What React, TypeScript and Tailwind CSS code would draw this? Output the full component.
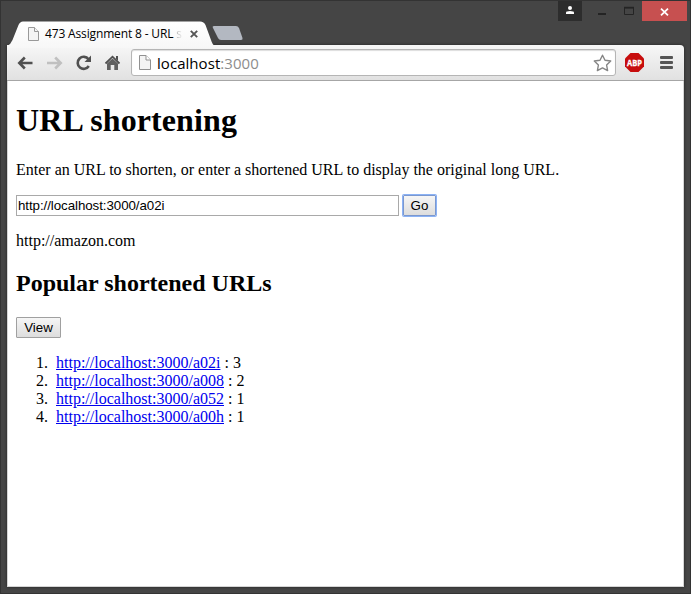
import React from "react";

const links = [
  { id: "a02i", hits: 3 },
  { id: "a008", hits: 2 },
  { id: "a052", hits: 1 },
  { id: "a00h", hits: 1 },
];

function PageIcon({ className }: { className: string }) {
  return (
    <svg className={className} width="12" height="15" viewBox="0 0 12 15" fill="none">
      <path d="M.5.5H7L11.5 5V14.5H.5Z" fill="#f4f4f4" stroke="#919191" />
      <path d="M7 .5V5H11.5" fill="#fff" stroke="#919191" />
    </svg>
  );
}

function TitleBar() {
  return (
    <header className="relative z-10 flex h-[44px] items-start">
      <div className="relative mt-[19px] h-[25px] w-[207px] shrink-0">
        <svg className="absolute inset-0" width="208" height="28" viewBox="0 0 208 28">
          <defs>
            <linearGradient id="tab" x1="0" y1="0" x2="0" y2="1">
              <stop offset="0" stopColor="#fff" />
              <stop offset="1" stopColor="#f7f7f7" />
            </linearGradient>
          </defs>
          <path
            d="M0 28V26Q4 24 5.500 20L11.500 5Q13 1.500 16 1.500H193Q197 1.500 198.500 5L204 20Q205.500 25 208 26V28Z"
            fill="url(#tab)"
          />
        </svg>
        <div className="relative flex h-full items-center pl-[21px] pt-[2px]">
          <svg className="shrink-0" width="11" height="14" viewBox="0 0 11 14" fill="#f4f4f4" stroke="#999">
            <path d="M.5.5H6.500L10.500 4.500V13.500H.5Z" />
            <path d="M6.500.5V4.500H10.500" />
          </svg>
          <div className="ml-[6px] w-[137px] whitespace-nowrap font-['Open_Sans',sans-serif] text-[12px] leading-4 tracking-[-0.15px] text-black">
            473 Assignment 8 - URL{" "}
            <span className="bg-gradient-to-r from-[#aaa] to-[#eee] bg-clip-text text-transparent">s</span>
          </div>
          <svg className="ml-[8px]" width="8" height="8" viewBox="0 0 8 8">
            <path d="M.8 .8L7.200 7.200M7.200 .8L.8 7.200" stroke="#555" strokeWidth="1.900" />
          </svg>
        </div>
      </div>
      <svg className="ml-[-3px] mt-[24px] shrink-0" width="32" height="16" viewBox="0 0 32 16">
        <path d="M3 1H25Q27 1 28 3L31.500 13Q32 15 30 15H10Q8 15 7 13L2 3Q1 1 3 1Z" fill="#b3b8c1" />
      </svg>
      <div className="ml-auto mr-[-3px] flex h-5">
        <div className="flex w-6 items-center justify-center bg-[#2d2d2d]">
          <svg className="mb-px" width="8" height="9" viewBox="0 0 8 9" fill="#fff">
            <circle cx="4" cy="2.100" r="2" />
            <path d="M0 8V6.500Q0 5 4 5T8 6.500V8Z" />
          </svg>
        </div>
        <svg width="60" height="20" viewBox="0 0 60 20">
          <path d="M16 12H24V14H16Z" fill="#242424" />
          <path d="M42.500 7V13.500H51.500V7Z" fill="none" stroke="#242424" />
          <path d="M42 6.500H52" stroke="#242424" strokeWidth="1.500" />
        </svg>
        <div className="flex w-[45px] items-center justify-center bg-[#c75050]">
          <svg className="mt-[1px]" width="9" height="8" viewBox="0 0 9 8">
            <path d="M1 .7L8 7.300M8 .7L1 7.300" stroke="#fff" strokeWidth="1.800" />
          </svg>
        </div>
      </div>
    </header>
  );
}

function Toolbar() {
  return (
    <div className="flex h-[36px] shrink-0 items-center rounded-tr border-b border-[#a6a6a6] bg-gradient-to-b from-[#f7f7f7] to-[#e1e1e1] pl-[10px]">
      <svg width="107" height="20" viewBox="0 0 107 20" fill="none" className="shrink-0">
        <path d="M15.500 10H2.500M7.800 4.500L2.300 10L7.800 15.500" stroke="#505050" strokeWidth="2.600" />
        <path d="M30 10H43M38.200 4.500L43.700 10L38.200 15.500" stroke="#c0c0c0" strokeWidth="2.600" />
        <path d="M71.500 6.200A6 6 0 1 0 71.800 13" stroke="#505050" strokeWidth="2.600" />
        <path d="M74 2.600V9H67.500Z" fill="#505050" />
        <path d="M88.500 10.500L95.500 3.700L102.500 10.500" stroke="#505050" strokeWidth="1.800" />
        <path d="M90 10.500L95.500 5.500L101 10.500V17H97.300V12H93.700V17H90Z" fill="#606060" />
        <path d="M99 3H101V8L99 6Z" fill="#505050" />
      </svg>
      <div className="ml-[7px] flex h-[27px] w-[485px] items-center rounded-[3px] border border-[#b5b5b5] bg-white pl-[7px] pr-[3px] shadow-[inset_0_1px_1px_#ddd]">
        <PageIcon className="shrink-0" />
        <span className="ml-[6px] font-['Open_Sans',sans-serif] text-[15px] leading-5 tracking-[0.05px] text-[#8d8d8d]">
          <span className="text-black">localhost</span>:3000
        </span>
        <svg className="ml-auto" width="19" height="18" viewBox="0 0 19 18">
          <path
            d="M9.500 1.200L12 6.300L17.700 7L13.600 11L14.600 16.600L9.500 13.900L4.400 16.600L5.400 11L1.300 7L7 6.300Z"
            fill="#fff"
            stroke="#858585"
            strokeWidth="1.400"
            strokeLinejoin="round"
          />
        </svg>
      </div>
      <svg className="ml-[9px] shrink-0 overflow-visible" width="19" height="19" viewBox="0 0 19 19">
        <path d="M5.500 0H13.500L19 5.500V13.500L13.500 19H5.500L0 13.500V5.500Z" fill="#c70d0d" />
        <text
          x="9.500"
          y="12.900"
          textAnchor="middle"
          textLength="15"
          lengthAdjust="spacingAndGlyphs"
          fill="#fff"
          stroke="#fff"
          strokeWidth="0.300"
          fontFamily="Open Sans, sans-serif"
          fontSize="9.500"
          fontWeight="700"
        >
          ABP
        </text>
      </svg>
      <svg className="ml-[16px] shrink-0" width="13" height="13" viewBox="0 0 13 13" fill="#555">
        <rect width="13" height="3" rx="1" />
        <rect y="5" width="13" height="3" rx="1" />
        <rect y="10" width="13" height="3" rx="1" />
      </svg>
    </div>
  );
}

const buttonStyle =
  "h-[21px] border bg-gradient-to-b from-[#f6f6f6] to-[#dddddd] text-center font-['Liberation_Sans',Arial,sans-serif] text-[13.333px] leading-[18px] text-black";

export default function App() {
  return (
    <div className="flex h-[594px] w-[691px] flex-col border border-[#333] bg-[#454545] px-[6px] pb-[6px]">
      <TitleBar />
      <div className="flex min-h-0 flex-1 flex-col rounded-tr shadow-[0_0_3px_#222]">
        <Toolbar />
        <main className="flex-1 border-x border-b border-[#d5d5d5] bg-white px-2 font-['Liberation_Serif','Times_New_Roman',serif] text-[16px] leading-[18px] text-black">
          <h1 className="pt-[21px] text-[32px] font-bold leading-[37px] tracking-[0.1px]">URL shortening</h1>
          <p className="mt-[22px] whitespace-nowrap">
            Enter an URL to shorten, or enter a shortened URL to display the original long URL.
          </p>
          <div className="mt-4 flex gap-1">
            <input
              className="h-[21px] w-[383px] border border-[#a9a9a9] bg-white px-px font-['Liberation_Sans',Arial,sans-serif] text-[13.333px] leading-4 tracking-[-0.07px] outline-none"
              defaultValue="http://localhost:3000/a02i"
            />
            <button
              className={`${buttonStyle} w-[33px] rounded-[1px] border-[#7b98cf] shadow-[0_0_0_1px_#8bb2f5]`}
            >
              Go
            </button>
          </div>
          <p className="mt-4">http://amazon.com</p>
          <h2 className="mt-5 text-[24px] font-bold leading-[27px]">Popular shortened URLs</h2>
          <button className={`${buttonStyle} mt-5 block w-[45px] rounded-[1px] border-[#a0a0a0]`}>View</button>
          <ol className="mt-4">
            {links.map(({ id, hits }, index) => (
              <li key={id} className="flex">
                <span className="w-8 text-right">{index + 1}.</span>
                <span className="ml-2">
                  <a className="text-[#0000ee] underline" href={`#${id}`}>
                    http://localhost:3000/{id}
                  </a>{" "}
                  : {hits}
                </span>
              </li>
            ))}
          </ol>
        </main>
      </div>
    </div>
  );
}
